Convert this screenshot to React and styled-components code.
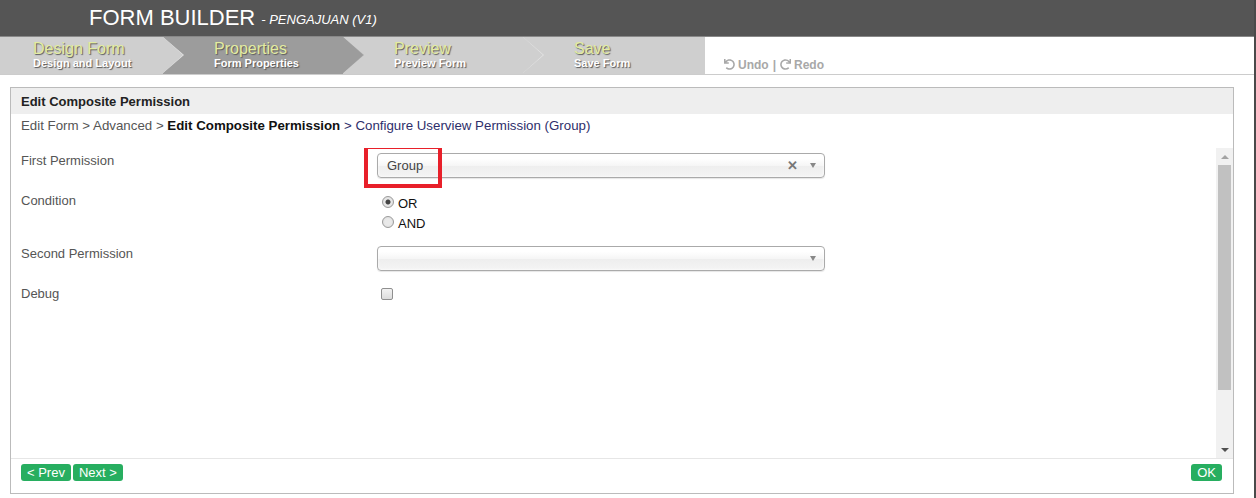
import React from 'react'
import styled, { createGlobalStyle } from 'styled-components'
import { FaUndo, FaRedo } from 'react-icons/fa'

const GlobalStyle = createGlobalStyle`
  html, body {
    margin: 0;
    padding: 0;
    background: #fff;
    font-family: "Liberation Sans", Arial, sans-serif;
  }
`

const Page = styled.div`
  width: 1256px;
  height: 498px;
  box-sizing: border-box;
  border-right: 2px solid #4a4a4a;
  overflow: hidden;
`

const Header = styled.div`
  height: 37px;
  background: #555;
  border-bottom: 1px solid #888;
  padding-left: 89px;
  display: flex;
  align-items: center;
  color: #fff;
  box-sizing: border-box;
`
const Title = styled.span`
  font-size: 22px;
`
const SubTitle = styled.span`
  font-size: 13px;
  font-style: italic;
  margin-left: 6px;
  margin-top: 3px;
`

const TabBar = styled.div`
  display: flex;
  height: 38px;
  box-sizing: border-box;
  border-bottom: 1px solid #ccc;
`
const Tab = styled.div`
  position: relative;
  width: ${p => p.$w}px;
  padding-left: ${p => p.$pad}px;
  box-sizing: border-box;
  background: ${p => (p.$active ? '#9c9c9c' : '#cfcfcf')};
  display: flex;
  flex-direction: column;
  justify-content: center;
  ${p =>
    p.$arrow &&
    `
    &::before {
      content: '';
      position: absolute;
      top: 0;
      right: -21px;
      border-top: 18.5px solid transparent;
      border-bottom: 18.5px solid transparent;
      border-left: 21px solid ${p.$active ? '#a8a8a8' : '#e6e6e6'};
      z-index: 1;
    }
    &::after {
      content: '';
      position: absolute;
      top: 0;
      right: -20px;
      border-top: 18.5px solid transparent;
      border-bottom: 18.5px solid transparent;
      border-left: 20px solid ${p.$active ? '#9c9c9c' : '#cfcfcf'};
      z-index: 2;
    }
  `}
`
const TabTitle = styled.div`
  position: relative;
  z-index: 3;
  font-size: 16px;
  line-height: 17px;
  color: #e3eca0;
  text-shadow: 1px 1px 1px #5a5a5a;
  margin-top: -1px;
`
const TabSub = styled.div`
  position: relative;
  z-index: 3;
  font-size: 11px;
  font-weight: bold;
  line-height: 13px;
  color: #fff;
  text-shadow: 1px 1px 1px #555;
`
const UndoBar = styled.div`
  flex: 1;
  display: flex;
  align-items: flex-end;
  padding: 0 0 2px 19px;
  font-size: 12px;
  font-weight: bold;
  color: #a8a8a8;
  gap: 4px;
  svg {
    width: 11px;
    height: 11px;
    margin-bottom: 1px;
  }
`
const UndoItem = styled.span`
  display: inline-flex;
  align-items: center;
  gap: 3px;
`

const Panel = styled.div`
  margin: 12px 0 0 10px;
  width: 1224px;
  height: 407px;
  box-sizing: border-box;
  border: 1px solid #bbb;
  display: flex;
  flex-direction: column;
`
const PanelHead = styled.div`
  height: 26px;
  flex-shrink: 0;
  background: #eee;
  padding-left: 10px;
  font-size: 13px;
  font-weight: bold;
  color: #222;
  display: flex;
  align-items: center;
`
const Crumbs = styled.div`
  height: 34px;
  flex-shrink: 0;
  box-sizing: border-box;
  padding: 4px 10px 0;
  line-height: 16px;
  font-size: 13.3px;
  color: #555;
`
const CrumbCurrent = styled.span`
  font-weight: bold;
  color: #111;
`
const CrumbNext = styled.span`
  color: #2e2e6b;
`

const Body = styled.div`
  height: 310px;
  flex-shrink: 0;
  display: flex;
  overflow: hidden;
`
const BodyInner = styled.div`
  flex: 1;
  padding: 5px 10px 0;
  box-sizing: border-box;
`

/* drawn scrollbar of the form body */
const ScrollTrack = styled.div`
  width: 17px;
  flex-shrink: 0;
  background: #f1f1f1;
  display: flex;
  flex-direction: column;
`
const ScrollButton = styled.div`
  height: 17px;
  flex-shrink: 0;
  display: flex;
  align-items: center;
  justify-content: center;
  &::before {
    content: '';
    border-left: 4px solid transparent;
    border-right: 4px solid transparent;
    ${p => (p.$down ? 'border-top: 4px solid #505050;' : 'border-bottom: 4px solid #a3a3a3;')}
  }
`
const ScrollThumb = styled.div`
  height: 225px;
  margin: 0 2px;
  background: #c1c1c1;
`
const ScrollSpace = styled.div`
  flex: 1;
`

const Row = styled.div`
  display: flex;
  margin-bottom: ${p => p.$mb || 0}px;
`
const Label = styled.div`
  width: 356px;
  flex-shrink: 0;
  font-size: 13px;
  line-height: 15px;
  color: #555;
`
const SelectBox = styled.div`
  position: relative;
  width: 448px;
  height: 25px;
  box-sizing: border-box;
  border: 1px solid #aaa;
  border-radius: 4px;
  background: linear-gradient(#fff 20%, #f6f6f6 50%, #eee 52%, #f4f4f4 100%);
  box-shadow: 0 0 3px #fff inset, 0 1px 1px rgba(0, 0, 0, 0.1);
  display: flex;
  align-items: center;
  padding: 0 8px 0 9px;
  font-size: 13px;
  color: #444;
`
const SelectValue = styled.span`
  flex: 1;
`
const ClearX = styled.span`
  font-size: 13px;
  font-weight: bold;
  color: #777;
  margin-right: 12px;
`
const Caret = styled.span`
  width: 0;
  height: 0;
  border-left: 3.5px solid transparent;
  border-right: 3.5px solid transparent;
  border-top: 5px solid #888;
`
const Highlight = styled.div`
  position: absolute;
  left: -14px;
  top: -9px;
  width: 78px;
  height: 43px;
  box-sizing: border-box;
  border: 4px solid #e8202a;
  pointer-events: none;
`

const RadioGroup = styled.div`
  padding-left: 5px;
`
const RadioOption = styled.label`
  display: flex;
  align-items: center;
  height: 20px;
  font-size: 13px;
  color: #111;
  gap: 4px;
`
const RadioDot = styled.span`
  width: 12px;
  height: 12px;
  box-sizing: border-box;
  border-radius: 50%;
  border: 1px solid #9a9a9a;
  background: radial-gradient(circle, ${p => (p.$checked ? '#444 0, #444 2px,' : '')} #e9e9e9 3px, #d8d8d8 100%);
  margin-top: -3px;
`
const CheckBox = styled.span`
  display: block;
  width: 12px;
  height: 12px;
  box-sizing: border-box;
  border: 1px solid #8f8f8f;
  border-radius: 2px;
  background: linear-gradient(#f2f2f2, #dcdcdc);
  margin: 2px 0 0 4px;
`

const Footer = styled.div`
  border-top: 1px solid #e6e6e6;
  padding: 5px 11px 0 10px;
  display: flex;
  gap: 2px;
`
const GreenButton = styled.button`
  height: 17px;
  padding: 0 6px;
  border: none;
  border-radius: 3px;
  background: #27ae60;
  color: #fff;
  font-family: inherit;
  font-size: 13px;
  line-height: 17px;
  cursor: pointer;
  ${p => p.$right && 'margin-left: auto;'}
`

const tabs = [
  { title: 'Design Form', sub: 'Design and Layout', w: 163, pad: 33, arrow: true },
  { title: 'Properties', sub: 'Form Properties', w: 180, pad: 51, arrow: true, active: true },
  { title: 'Preview', sub: 'Preview Form', w: 180, pad: 51, arrow: true },
  { title: 'Save', sub: 'Save Form', w: 182, pad: 51 },
]

const App = () => {
  return (
    <Page>
      <GlobalStyle />
      <Header>
        <Title>FORM BUILDER</Title>
        <SubTitle>- PENGAJUAN (V1)</SubTitle>
      </Header>
      <TabBar>
        {tabs.map(t => (
          <Tab key={t.title} $w={t.w} $pad={t.pad} $arrow={t.arrow} $active={t.active}>
            <TabTitle>{t.title}</TabTitle>
            <TabSub>{t.sub}</TabSub>
          </Tab>
        ))}
        <UndoBar>
          <UndoItem><FaUndo />Undo</UndoItem>|
          <UndoItem><FaRedo />Redo</UndoItem>
        </UndoBar>
      </TabBar>

      <Panel>
        <PanelHead>Edit Composite Permission</PanelHead>
        <Crumbs>
          Edit Form &gt; Advanced &gt; <CrumbCurrent>Edit Composite Permission</CrumbCurrent>
          <CrumbNext> &gt; Configure Userview Permission (Group)</CrumbNext>
        </Crumbs>
        <Body>
          <BodyInner>
            <Row $mb={15}>
              <Label>First Permission</Label>
              <SelectBox>
                <SelectValue>Group</SelectValue>
                <ClearX>✕</ClearX>
                <Caret />
                <Highlight />
              </SelectBox>
            </Row>
            <Row $mb={13}>
              <Label>Condition</Label>
              <RadioGroup>
                <RadioOption><RadioDot $checked />OR</RadioOption>
                <RadioOption><RadioDot />AND</RadioOption>
              </RadioGroup>
            </Row>
            <Row $mb={15}>
              <Label>Second Permission</Label>
              <SelectBox>
                <SelectValue />
                <Caret />
              </SelectBox>
            </Row>
            <Row>
              <Label>Debug</Label>
              <CheckBox />
            </Row>
          </BodyInner>
          <ScrollTrack>
            <ScrollButton />
            <ScrollThumb />
            <ScrollSpace />
            <ScrollButton $down />
          </ScrollTrack>
        </Body>
        <Footer>
          <GreenButton>&lt; Prev</GreenButton>
          <GreenButton>Next &gt;</GreenButton>
          <GreenButton $right>OK</GreenButton>
        </Footer>
      </Panel>
    </Page>
  )
}

export default App
